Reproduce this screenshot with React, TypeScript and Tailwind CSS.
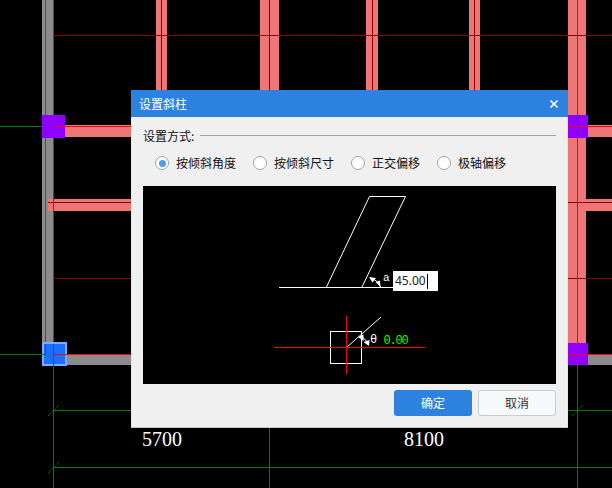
const CJK = "font-['Noto_Sans_CJK_SC','Noto_Sans',sans-serif]";

function CadBackground() {
  const gray = '#8c8c8c';
  const pink = '#ee7677';
  const purple = '#8f00ff';
  const darkRed = '#8b0000';
  const green = '#008000';
  const columns: [number, number, number][] = [
    [156, 11, 161.5],
    [260, 19, 269.5],
    [366, 12, 372.5],
    [469, 11, 474.5],
  ];
  return (
    <svg className="absolute inset-0" width={612} height={488} viewBox="0 0 612 488" shapeRendering="crispEdges">
      {columns.map(([x, w]) => (
        <rect key={x} x={x} y={0} width={w} height={100} fill={pink} />
      ))}
      <rect x={568} y={0} width={18} height={344} fill={pink} />
      <rect x={42} y={0} width={11} height={345} fill={gray} />
      <rect x={65} y={125} width={70} height={12} fill={pink} />
      <rect x={48} y={199} width={87} height={12} fill={pink} />
      <rect x={586} y={199} width={26} height={12} fill={pink} />
      <rect x={588} y={125} width={24} height={12} fill={pink} />
      <rect x={66} y={355} width={70} height={10} fill={gray} />
      <rect x={588} y={355} width={24} height={10} fill={gray} />

      <path d={`M53 35.5H612M48 202.5H131M568 202.5H612M53 278.5H131M568 278.5H612`} stroke={darkRed} fill="none" />
      <path d="M161.5 0V100M269.5 0V100M372.5 0V100M474.5 0V100" stroke={darkRed} fill="none" />
      <path d="M45.5 0V354M53.5 0V125M53.5 138V342M577.5 0V354" stroke="#ff0000" fill="none" />

      <rect x={42} y={115} width={23} height={23} fill={purple} />
      <rect x={568} y={115} width={20} height={23} fill={purple} />
      <rect x={568} y={343} width={20} height={22} fill={purple} />
      <path d="M45.5 115V138M577.5 115V138" stroke="#c00000" fill="none" />
      <path d="M53 126.5H131M568 126.5H612M568 354.5H612" stroke="#ff0000" strokeWidth={1} fill="none" />
      <path d="M0 126.5H42" stroke={green} fill="none" />

      <rect x={42.5} y={343} width={23} height={22} fill="#1a6fff" stroke="#7faaff" strokeWidth={2} />
      <path d="M45.5 344V354M53.5 344V354M53 354.5H66M66 354.5H131" stroke="#ff0000" fill="none" />
      <path d="M0 354.5H46M45.5 354V355M53.5 354V488M577.5 355V488M269.5 428V488M53 410.5H131M568 410.5H612M53 467.5H612" stroke={green} fill="none" />
      <g shapeRendering="auto" stroke={green} strokeDasharray="1.2 0.6" fill="none">
        <path d="M48 416L59 405M48 473L59 462M572 416L583 405" />
      </g>

      <g shapeRendering="auto" fill="#ffffff" fontFamily="'Liberation Serif', serif" fontSize={20}>
        <text x={142} y={446}>5700</text>
        <text x={404} y={446}>8100</text>
      </g>
    </svg>
  );
}

function Radio({ label, checked }: { label: string; checked?: boolean }) {
  return (
    <div className="flex items-center gap-[7px]">
      <span className="flex h-[14px] w-[14px] items-center justify-center rounded-full border border-[#a3a3a3] bg-white">
        {checked && <span className="h-[7px] w-[7px] rounded-full bg-[#4f9dfb]" />}
      </span>
      <span className="text-[12px] leading-[16px] text-[#111111]">{label}</span>
    </div>
  );
}

function Preview() {
  return (
    <div className="relative h-[198px] w-full bg-black">
      <svg className="absolute inset-0" width={413} height={198} viewBox="143 186 413 198">
        <g fill="none" stroke="#ffffff" strokeWidth={1}>
          <path d="M279 287.5H393" shapeRendering="crispEdges" />
          <path d="M326.5 287L369.5 196.5H405.5L362 287" />
          <path d="M370 278Q378 280 380.5 287" />
          <path d="M330.5 331.5H361.5V363.5H330.5Z" shapeRendering="crispEdges" />
          <path d="M346.5 347.5L381 317" />
          <path d="M362 337Q367 340 368.5 345" />
        </g>
        <path d="M369 277L376 278L372.5 282.5Z M380.5 287L375.5 282L380 280.5Z" fill="#ffffff" />
        <path d="M358 337L363.5 334.5L363.5 341Z M369 346L363.5 342L369.5 340Z" fill="#ffffff" />
        <path d="M274 347.5H425M346.5 316V374" stroke="#ff0000" fill="none" shapeRendering="crispEdges" />
        <text x={383} y={281} fill="#ffffff" fontFamily="'Liberation Mono', monospace" fontSize={11}>a</text>
        <text x={370} y={343} fill="#ffffff" fontFamily="'Liberation Mono', monospace" fontSize={12}>θ</text>
        <text x={383.5} y={344} fill="#00ff00" fontFamily="'Liberation Mono', monospace" fontSize={12} letterSpacing={-1.2}>0.00</text>
      </svg>
      <div className="absolute left-[250px] top-[85px] flex h-[20px] w-[45px] items-center bg-white pl-[2px] text-[12px] text-[#222222] font-['Noto_Sans','Liberation_Sans',sans-serif]">
        <span>45.00</span>
        <span className="ml-[1px] h-[15px] w-px bg-black" />
      </div>
    </div>
  );
}

export default function App() {
  return (
    <div className={`relative h-[488px] w-[612px] overflow-hidden bg-black ${CJK}`}>
      <CadBackground />
      <div className="absolute left-[131px] top-[90px] flex h-[338px] w-[437px] flex-col">
        <div className="flex h-[27px] shrink-0 items-center justify-between bg-[#2d82e0] pl-[8px] pr-[9px]">
          <span className="text-[12px] text-white">设置斜柱</span>
          <svg width={10} height={10} viewBox="0 0 10 10">
            <path d="M1.5 1.5L8.5 8.5M8.5 1.5L1.5 8.5" stroke="#ffffff" strokeWidth={1.6} fill="none" />
          </svg>
        </div>
        <div className="flex flex-1 flex-col border-x border-b border-x-[#e4e6ea] border-b-[#c5c8cf] bg-[#f0f0f0] px-[11px]">
          <div className="mt-[10px] flex h-[17px] items-center gap-[6px]">
            <span className="text-[12px] leading-[17px] text-[#111111]">设置方式:</span>
            <span className="h-px flex-1 bg-[#a3a3a3]" />
          </div>
          <div className="ml-[12px] mt-[11px] flex h-[16px] items-center gap-[17px]">
            <Radio label="按倾斜角度" checked />
            <Radio label="按倾斜尺寸" />
            <Radio label="正交偏移" />
            <Radio label="极轴偏移" />
          </div>
          <div className="mt-[15px]">
            <Preview />
          </div>
          <div className="mt-[6px] flex justify-end gap-[6px]">
            <button className="h-[26px] w-[78px] rounded-[3px] bg-[#2d82e0] text-[12px] text-white">确定</button>
            <button className="h-[26px] w-[78px] rounded-[3px] border border-[#c5cbda] bg-[#f8f9fb] text-[12px] text-[#333333]">取消</button>
          </div>
        </div>
      </div>
    </div>
  );
}
